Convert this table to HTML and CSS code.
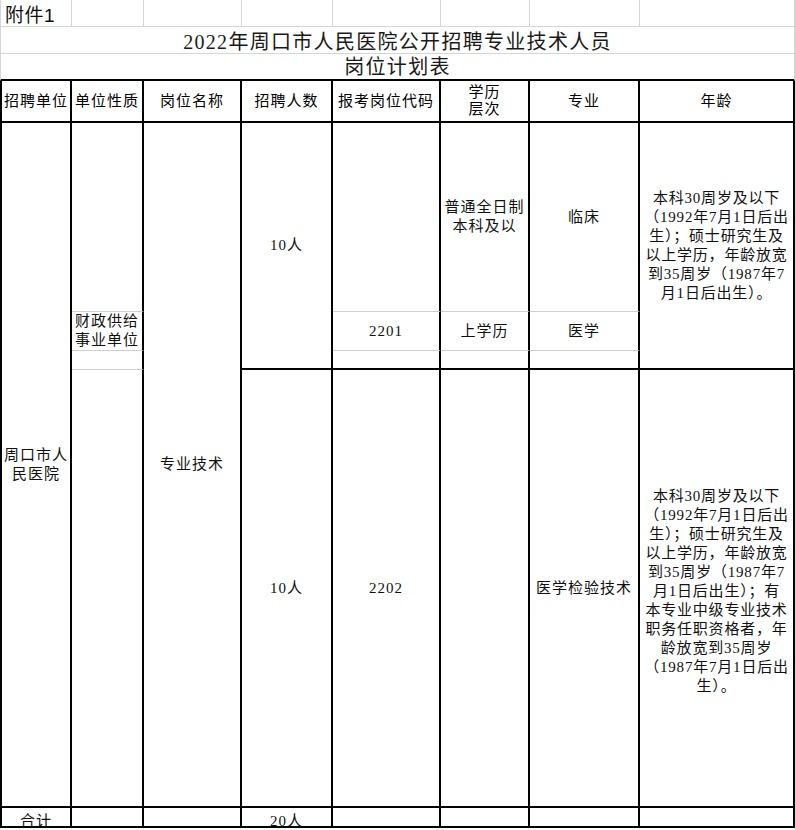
FILE: index.html
```html
<!DOCTYPE html>
<html lang="zh-CN">
<head>
<meta charset="utf-8">
<title>岗位计划表</title>
<link rel="stylesheet" href="styles.css">
</head>
<body>
<div class="sheet">
  <!-- row 1 -->
  <div class="c top first attach">附件1</div>
  <div class="c top"></div>
  <div class="c top"></div>
  <div class="c top"></div>
  <div class="c top"></div>
  <div class="c top"></div>
  <div class="c top"></div>
  <div class="c top"></div>

  <!-- title -->
  <div class="c full title t1">2022年周口市人民医院公开招聘专业技术人员</div>
  <div class="c full title t2">岗位计划表</div>

  <!-- header -->
  <div class="c head first">招聘单位</div>
  <div class="c head">单位性质</div>
  <div class="c head">岗位名称</div>
  <div class="c head">招聘人数</div>
  <div class="c head">报考岗位代码</div>
  <div class="c head tight">学历<br>层次</div>
  <div class="c head">专业</div>
  <div class="c head">年龄</div>

  <!-- body row 5 -->
  <div class="c first span4">周口市人<br>民医院</div>
  <div class="c gb"></div>
  <div class="c span4">专业技术</div>
  <div class="c span3">10人</div>
  <div class="c gb"></div>
  <div class="c gb">普通全日制<br>本科及以</div>
  <div class="c gb">临床</div>
  <div class="c span3 age">本科30周岁及以下<br>（1992年7月1日后出<br>生）；硕士研究生及<br>以上学历，年龄放宽<br>到35周岁（1987年7<br>月1日后出生）。</div>

  <!-- body row 6 -->
  <div class="c gb">财政供给<br>事业单位</div>
  <div class="c gb">2201</div>
  <div class="c gb">上学历</div>
  <div class="c gb">医学</div>

  <!-- body row 7 -->
  <div class="c gb"></div>
  <div class="c"></div>
  <div class="c"></div>
  <div class="c"></div>

  <!-- body row 8 -->
  <div class="c"></div>
  <div class="c">10人</div>
  <div class="c">2202</div>
  <div class="c"></div>
  <div class="c">医学检验技术</div>
  <div class="c age age2">本科30周岁及以下<br>（1992年7月1日后出<br>生）；硕士研究生及<br>以上学历，年龄放宽<br>到35周岁（1987年7<br>月1日后出生）；有<br>本专业中级专业技术<br>职务任职资格者，年<br>龄放宽到35周岁<br>（1987年7月1日后出<br>生）。</div>

  <!-- total row -->
  <div class="c first total">合计</div>
  <div class="c total"></div>
  <div class="c total"></div>
  <div class="c total">20人</div>
  <div class="c total"></div>
  <div class="c total"></div>
  <div class="c total"></div>
  <div class="c total"></div>
</div>
</body>
</html>
```

FILE: styles.css
```css
html, body {
  margin: 0;
  padding: 0;
  background: #ffffff;
}

.sheet {
  display: grid;
  grid-template-columns: 72px 72px 98px 91px 108px 89px 110px 155px;
  grid-template-rows: 27px 27px 27px 42px 189px 39px 19px 438px 20px;
  width: 795px;
  font-family: "Liberation Serif", "Noto Sans CJK SC", serif;
  font-size: 15px;
  color: #111;
}

.c {
  box-sizing: border-box;
  display: flex;
  align-items: center;
  justify-content: center;
  text-align: center;
  overflow: hidden;
  white-space: nowrap;
  line-height: 19px;
  letter-spacing: 1px;
  border-right: 2px solid #000;
  border-bottom: 2px solid #000;
}

.c.first {
  border-left: 2px solid #000;
}

/* top spreadsheet row */
.c.top {
  border-right: 1px solid #d6d6d6;
  border-bottom: 1px solid #d6d6d6;
}

.c.top.first {
  border-left: 1px solid #d6d6d6;
}

.attach {
  justify-content: flex-start;
  padding: 4px 0 0 4px;
  font-family: "Liberation Sans", "Noto Sans CJK SC", sans-serif;
  font-size: 19px;
  letter-spacing: 0.5px;
}

/* title rows */
.c.full {
  grid-column: 1 / -1;
  border-left: 1px solid #d6d6d6;
  border-right: 1px solid #d6d6d6;
}

.title {
  font-size: 20px;
  letter-spacing: 1.3px;
  color: #1a1a1a;
}

.t1 {
  padding-top: 4px;
  border-bottom: 1px solid #d6d6d6;
}

.c.t2 {
  padding-top: 1px;
  border-bottom: 2px solid #000;
}

/* header */
.head {
  font-size: 15px;
  letter-spacing: 1px;
  color: #000;
}

.tight {
  line-height: 17px;
}

/* spans */
.span4 {
  grid-row: span 4;
}

.span3 {
  grid-row: span 3;
}

/* grey bottom separators */
.c.gb {
  border-bottom: 1px solid #cfcfcf;
}

.age {
  letter-spacing: 0.8px;
}

.age2 {
  padding-top: 6px;
}

/* total row: text clipped by the bottom border */
.total {
  align-items: flex-start;
  padding-top: 4px;
}
```
